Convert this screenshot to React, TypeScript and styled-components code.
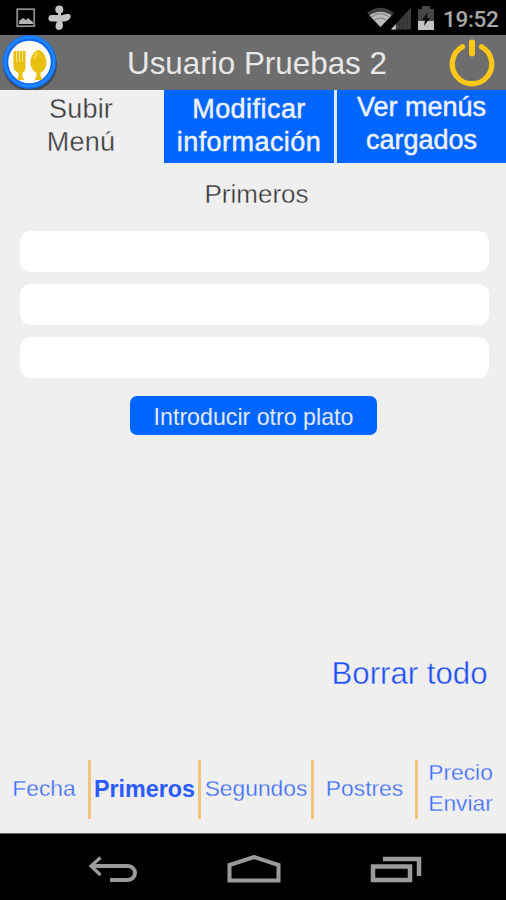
import React from "react";
import styled, { createGlobalStyle } from "styled-components";

const GlobalStyle = createGlobalStyle`
  * { box-sizing: border-box; }
  body { margin: 0; background: #000; }
  button { font: inherit; color: inherit; border: 0; padding: 0; background: none; }
`;

const Screen = styled.div`
  width: 506px;
  height: 900px;
  display: flex;
  flex-direction: column;
  overflow: hidden;
  background: #efefef;
  font-family: "Liberation Sans", Arial, sans-serif;
`;

const StatusBar = styled.div`
  height: 35px;
  flex: none;
  display: flex;
  align-items: center;
  justify-content: space-between;
  background: #000;
  padding: 0 7px 0 16px;
`;

const StatusGroup = styled.div<{ $gap?: number }>`
  display: flex;
  align-items: center;
  gap: ${(p) => p.$gap ?? 0}px;
  height: 35px;
`;

const Clock = styled.span`
  width: 56px;
  margin-left: 8px;
  padding-top: 2px;
  font: 500 22.5px/24px Roboto, sans-serif;
  letter-spacing: -0.3px;
  white-space: nowrap;
  color: #a8a8a8;
`;

const Header = styled.header`
  height: 55px;
  flex: none;
  display: flex;
  align-items: center;
  justify-content: space-between;
  padding-right: 11px;
  background: #6d6d6d;
`;

const Title = styled.h1`
  margin: 0;
  padding: 2px 0 0 5px;
  font-size: 31.4px;
  font-weight: 400;
  line-height: 53px;
  color: #e8e8e8;
  white-space: nowrap;
`;

const Tabs = styled.nav`
  height: 74px;
  flex: none;
  display: grid;
  grid-template-columns: 164px 173px 169px;
`;

const Tab = styled.button<{ $active?: boolean; $divided?: boolean; $raise?: number; $spacing?: number }>`
  height: ${(p) => (p.$active ? 74 : 73)}px;
  padding-top: ${(p) => 3 - (p.$raise ?? 0)}px;
  padding-right: ${(p) => (p.$active ? 2 : 0)}px;
  display: flex;
  flex-direction: column;
  align-items: center;
  justify-content: flex-start;
  border-right: ${(p) => (p.$divided ? "3px solid #dde6fb" : "0")};
  font-size: 27px;
  line-height: 32.5px;
  letter-spacing: ${(p) => p.$spacing ?? 0}px;
  color: ${(p) => (p.$active ? "#3c3c3c" : "#eef2ff")};
  background: ${(p) => (p.$active ? "#efefef" : "#0066ff")};
  -webkit-text-stroke: ${(p) => (p.$active ? "0.3px #efefef" : "0.5px #eef2ff")};
`;

const Content = styled.main`
  flex: 1;
  display: flex;
  flex-direction: column;
  align-items: center;
`;

const SectionTitle = styled.h2`
  margin: 15px 0 22px;
  padding-left: 7px;
  font-size: 26px;
  font-weight: 400;
  line-height: 30px;
  color: #333;
  -webkit-text-stroke: 0.4px #efefef;
`;

const Fields = styled.div`
  width: 469px;
  margin-left: 3px;
  display: flex;
  flex-direction: column;
  gap: 12px;
`;

const Field = styled.input`
  display: block;
  width: 100%;
  height: 41px;
  border: 0;
  border-radius: 11px;
  background: #fff;
  outline: none;
`;

const AddButton = styled.button`
  width: 247px;
  height: 39px;
  margin: 18px 0 0 1px;
  padding-top: 3px;
  border-radius: 7px;
  background: #0066ff;
  color: #e0e8ff;
  font-size: 23.2px;
  line-height: 36px;
  white-space: nowrap;
`;

const ClearButton = styled.button`
  align-self: flex-end;
  margin: 219px 18.5px 0 0;
  font-size: 31.2px;
  line-height: 40px;
  color: #1e50f5;
  -webkit-text-stroke: 0.4px #efefef;
`;

const Steps = styled.nav`
  height: 74px;
  flex: none;
  display: grid;
  grid-template-columns: 91px 110px 113px 104px 88px;
  padding-top: 1px;
`;

const Step = styled.button<{ $active?: boolean; $last?: boolean }>`
  display: flex;
  flex-direction: column;
  align-items: center;
  justify-content: center;
  height: 59px;
  padding-bottom: ${(p) => (p.$active ? 1 : p.$last ? 3 : 2)}px;
  padding-right: ${(p) => (p.$last ? 3 : 0)}px;
  border-right: ${(p) => (p.$last ? "0" : "3px solid #f2c57f")};
  font-size: ${(p) => (p.$active ? 23.3 : 22.8)}px;
  font-weight: ${(p) => (p.$active ? 700 : 400)};
  line-height: 31px;
  color: ${(p) => (p.$active ? "#2b5aff" : "#3d6bfa")};
  -webkit-text-stroke: ${(p) => (p.$active ? "0" : "0.3px #efefef")};
`;

const NavBar = styled.footer`
  height: 67px;
  flex: none;
  display: flex;
  align-items: center;
  justify-content: space-between;
  padding: 5px 84px 0 87px;
  border-top: 1px solid #666;
  background: #000;
`;

const SignalPair = styled.div`
  display: flex;
  align-items: center;
  width: 46px;
  margin-right: 4px;

  svg:last-child {
    margin-left: -3px;
  }
`;

const PictureIcon = () => (
  <svg width="20" height="20" viewBox="0 0 20 20">
    <rect x="1.2" y="1.2" width="17" height="17" fill="none" stroke="#8c8c8c" strokeWidth="1.8" />
    <path d="M3 16v-3l4-3 3 2 2-2 5 4v2z" fill="#b0b0b0" />
  </svg>
);

const PinwheelIcon = () => (
  <svg width="24" height="26" viewBox="0 0 24 26">
    <g fill="#c4c4c4">
      <circle cx="11.3" cy="4.5" r="4" />
      <rect x="0.5" y="10" width="12" height="6.5" rx="3" />
      <path d="M11 10.5c4 0 5-1.500 9-1.500 4.500 0 3 5.500-1 7-2 .6-5 .6-8 .5z" />
      <path d="M9 15h5c0 2 1 3 1 6-.5 5-7 5-7.500 1-.2-2.500 1.500-4 1.500-7z" />
      <path d="M10 8h3v5h-3z" />
    </g>
  </svg>
);

const WifiIcon = () => (
  <svg width="27" height="21" viewBox="0 0 27 21">
    <path d="M0 6Q13.5-4.5 27 6L13.5 20.5z" fill="#3e3e3e" />
    <path d="M2.500 8.500Q13.500 1 24.500 8.500L13.500 20z" fill="#bbb" />
    <path d="M4 10.300Q13.500 3 23 10.300M7 13.500q6.500-5 13 0" fill="none" stroke="#777" strokeWidth="1" />
  </svg>
);

const SignalIcon = () => (
  <svg width="21" height="24" viewBox="0 0 22 24">
    <path d="M0 24L21 1v23z" fill="#3c3c3c" />
    <path d="M0 24l5-5.500V24z" fill="#d0d0d0" />
    <path d="M9 15v9M13 11v13M17 7v17" stroke="#303030" />
  </svg>
);

const BatteryIcon = () => (
  <svg width="18" height="24" viewBox="0 0 18 24">
    <path d="M5 0h8v3h4v21H1V3h4z" fill="#474747" />
    <path d="M1 15h16v9H1z" fill="#c4c4c4" />
    <path d="M11 6L5 14h3l-1 6 6-8H9.500z" fill="#090909" />
  </svg>
);

const Logo = () => (
  <svg width="60" height="55" viewBox="0 0 60 55">
    <ellipse cx="30" cy="30" rx="27" ry="26" fill="#363636" opacity=".7" />
    <circle cx="29.5" cy="27" r="27" fill="#0b68ea" />
    <circle cx="29.5" cy="26.500" r="24.500" fill="none" stroke="#2083fb" strokeWidth="3" />
    <circle cx="29.5" cy="27" r="21.300" fill="#fffdf8" />
    <g fill="#e8c012">
      <path d="M13.500 16h12v16c0 3-1 4-3 6v4l2 3h-8l2-3v-4c-3-2-5-3-5-6z" />
      <path d="M38.500 15c4 0 8 7 8 12 0 6-3 9-6 11v3l2 4h-8l2-4v-3c-3-2-6-5-6-11 0-5 4-12 8-12z" />
    </g>
    <path d="M16.500 16v11M19.500 16v11M22.500 16v11" stroke="#fbe58a" strokeWidth="1" />
    <path d="M34 24q1-5 4-6" stroke="#f7d94a" strokeWidth="2" fill="none" />
  </svg>
);

const PowerIcon = () => (
  <svg width="46" height="48" viewBox="0 0 46 48">
    <g fill="none" stroke="#fcc817" strokeLinecap="round">
      <path d="M13.500 7.800A19.700 19.700 0 1 0 32.500 7.800" strokeWidth="5.300" />
      <path d="M23 3.500V14.500" strokeWidth="6" />
    </g>
  </svg>
);

const BackIcon = () => (
  <svg width="50" height="28" viewBox="0 0 50 28">
    <g fill="none" stroke="#9b9b9b">
      <path d="M4 10H41a7 7 0 0 1 0 14H23" strokeWidth="4" />
      <path d="M13.500 1.500L4 10l9.500 9" strokeWidth="3.200" />
    </g>
  </svg>
);

const HomeIcon = () => (
  <svg width="54" height="30" viewBox="0 0 54 30">
    <path d="M2.500 25.500V10L27 2 51.500 10V25.500z" fill="none" stroke="#9b9b9b" strokeWidth="4" />
  </svg>
);

const RecentsIcon = () => (
  <svg width="52" height="28" viewBox="0 0 52 28">
    <g fill="none" stroke="#9b9b9b">
      <path d="M3 10.500H40V24H3z" strokeWidth="4.500" />
      <path d="M13 3H49V20" strokeWidth="4.500" />
    </g>
  </svg>
);

export default function App() {
  return (
    <>
      <GlobalStyle />
      <Screen>
        <StatusBar>
          <StatusGroup $gap={12}>
            <PictureIcon />
            <PinwheelIcon />
          </StatusGroup>
          <StatusGroup>
            <SignalPair>
              <WifiIcon />
              <SignalIcon />
            </SignalPair>
            <BatteryIcon />
            <Clock>19:52</Clock>
          </StatusGroup>
        </StatusBar>
        <Header>
          <Logo />
          <Title>Usuario Pruebas 2</Title>
          <PowerIcon />
        </Header>
        <Tabs>
          <Tab $active $spacing={0.2}>
            <span>Subir</span>
            <span>Menú</span>
          </Tab>
          <Tab $divided $spacing={0.45}>
            <span>Modificar</span>
            <span>información</span>
          </Tab>
          <Tab $raise={2}>
            <span>Ver menús</span>
            <span>cargados</span>
          </Tab>
        </Tabs>
        <Content>
          <SectionTitle>Primeros</SectionTitle>
          <Fields>
            <Field aria-label="Primer plato 1" />
            <Field aria-label="Primer plato 2" />
            <Field aria-label="Primer plato 3" />
          </Fields>
          <AddButton>Introducir otro plato</AddButton>
          <ClearButton>Borrar todo</ClearButton>
        </Content>
        <Steps>
          <Step>Fecha</Step>
          <Step $active>Primeros</Step>
          <Step>Segundos</Step>
          <Step>Postres</Step>
          <Step $last>
            <span>Precio</span>
            <span>Enviar</span>
          </Step>
        </Steps>
        <NavBar>
          <BackIcon />
          <HomeIcon />
          <RecentsIcon />
        </NavBar>
      </Screen>
    </>
  );
}
